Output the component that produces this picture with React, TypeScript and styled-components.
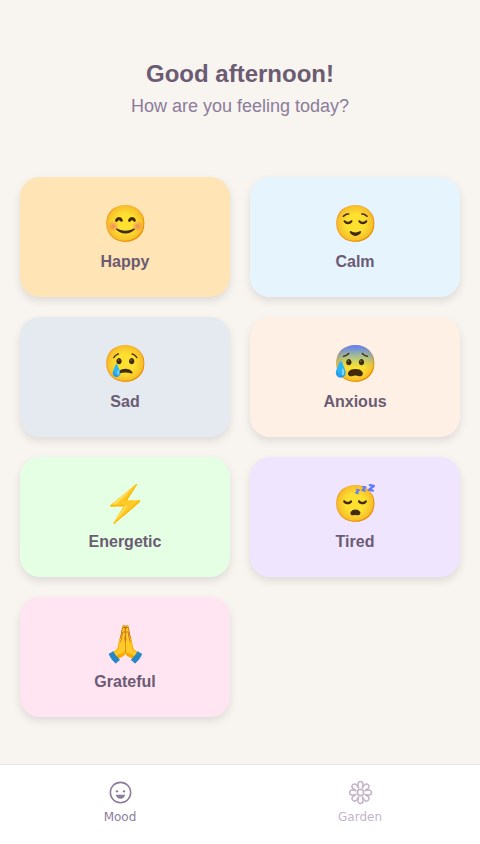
import React, { useState } from "react";
import styled, { createGlobalStyle } from "styled-components";
import { IoFlowerOutline, IoHappyOutline } from "react-icons/io5";

const GlobalStyle = createGlobalStyle`
  * { box-sizing: border-box; }
  body { margin: 0; background: #f8f4f0; }
`;

const Screen = styled.div`
  min-height: 100vh;
  display: flex;
  flex-direction: column;
  background: #f8f4f0;
  font-family: "Liberation Sans", Arial, sans-serif;
`;

const Content = styled.main`
  flex: 1;
  padding: 60px 20px 40px;
`;

const Header = styled.header`
  display: flex;
  flex-direction: column;
  gap: 8px;
  margin-bottom: 60px;
  text-align: center;
`;

const Title = styled.h1`
  margin: 0;
  color: #6b5b73;
  font-size: 24px;
  font-weight: 700;
  line-height: 28px;
`;

const Subtitle = styled.p`
  margin: 0;
  color: #8b7d9b;
  font-size: 18px;
  line-height: 21px;
`;

const MoodGrid = styled.div`
  display: grid;
  grid-template-columns: repeat(2, minmax(0, 1fr));
  gap: 20px;
`;

const MoodCard = styled.button<{ $tint: string }>`
  display: flex;
  flex-direction: column;
  align-items: center;
  justify-content: center;
  gap: 8px;
  min-height: 120px;
  padding: 20px;
  border: 0;
  border-radius: 20px;
  background: ${({ $tint }) => $tint};
  box-shadow: 0 4px 8px rgba(0, 0, 0, 0.1);
  color: #6b5b73;
  font-family: inherit;
  cursor: pointer;
`;

const Emoji = styled.span`
  font-size: 36px;
  line-height: 42px;
`;

const MoodName = styled.span`
  font-size: 16px;
  font-weight: 700;
  line-height: 18px;
`;

const TabBar = styled.nav`
  display: flex;
  min-height: 80px;
  border-top: 1px solid #ece4ec;
  background: #ffffff;
`;

const Tab = styled.button<{ $active: boolean }>`
  flex: 1;
  display: flex;
  flex-direction: column;
  align-items: center;
  justify-content: flex-start;
  gap: 4px;
  padding: 15px 0 12px;
  border: 0;
  background: transparent;
  color: ${({ $active }) => ($active ? "#8b7d9b" : "#c4b5c9")};
  font-family: "DejaVu Sans", sans-serif;
  font-size: 12px;
  line-height: 16px;
  cursor: pointer;
`;

const moods = [
  { name: "Happy", emoji: "😊", tint: "#ffe4b5" },
  { name: "Calm", emoji: "😌", tint: "#e6f4fe" },
  { name: "Sad", emoji: "😢", tint: "#e5e9f0" },
  { name: "Anxious", emoji: "😰", tint: "#fff0e5" },
  { name: "Energetic", emoji: "⚡", tint: "#e5ffe5" },
  { name: "Tired", emoji: "😴", tint: "#efe5fe" },
  { name: "Grateful", emoji: "🙏", tint: "#ffe5f1" },
];

const tabs = [
  { name: "Mood", Icon: IoHappyOutline },
  { name: "Garden", Icon: IoFlowerOutline },
];

export default function App() {
  const [activeTab, setActiveTab] = useState("Mood");

  return (
    <Screen>
      <GlobalStyle />
      <Content>
        <Header>
          <Title>Good afternoon!</Title>
          <Subtitle>How are you feeling today?</Subtitle>
        </Header>
        <MoodGrid>
          {moods.map(({ name, emoji, tint }) => (
            <MoodCard key={name} type="button" $tint={tint}>
              <Emoji aria-hidden="true">{emoji}</Emoji>
              <MoodName>{name}</MoodName>
            </MoodCard>
          ))}
        </MoodGrid>
      </Content>
      <TabBar>
        {tabs.map(({ name, Icon }) => (
          <Tab
            key={name}
            type="button"
            $active={activeTab === name}
            aria-current={activeTab === name ? "page" : undefined}
            onClick={() => setActiveTab(name)}
          >
            <Icon size={25} aria-hidden="true" />
            {name}
          </Tab>
        ))}
      </TabBar>
    </Screen>
  );
}
